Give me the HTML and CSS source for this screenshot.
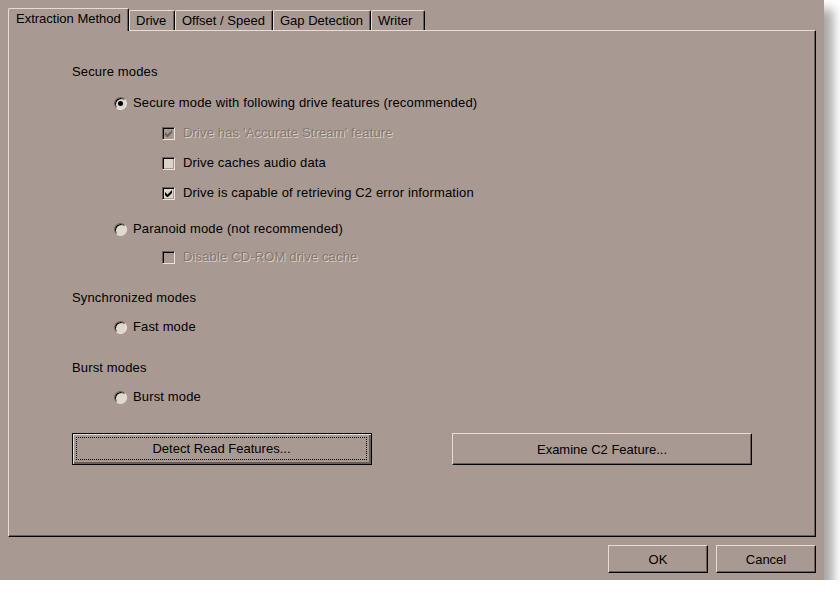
FILE: index.html
```html
<!DOCTYPE html>
<html>
  <head>
    <title>Drive Options</title>
    <link rel="stylesheet" href="styles.css">
  </head>
  <body>
    <div class="window">
      <div class="tabs">
        <div class="tab active">Extraction Method</div>
        <div class="tab tab-drive">Drive</div>
        <div class="tab tab-offset">Offset / Speed</div>
        <div class="tab tab-gap">Gap Detection</div>
        <div class="tab tab-writer">Writer</div>
      </div>

      <div class="panel">
        <div class="heading first">Secure modes</div>

        <div class="option radio-row r-secure">
          <span class="radio checked"></span>
          <span>Secure mode with following drive features (recommended)</span>
        </div>
        <div class="option check-row c-stream disabled">
          <span class="check checked">
            <svg width="7" height="7" viewBox="0 0 7 7"><path d="M0 2v3l2 2h1l4-4V0L2.5 4.5z" /></svg>
          </span>
          <span>Drive has 'Accurate Stream' feature</span>
        </div>
        <div class="option check-row c-cache">
          <span class="check"></span>
          <span>Drive caches audio data</span>
        </div>
        <div class="option check-row c-c2">
          <span class="check checked">
            <svg width="7" height="7" viewBox="0 0 7 7"><path d="M0 2v3l2 2h1l4-4V0L2.5 4.5z" /></svg>
          </span>
          <span>Drive is capable of retrieving C2 error information</span>
        </div>

        <div class="option radio-row r-paranoid">
          <span class="radio"></span>
          <span>Paranoid mode (not recommended)</span>
        </div>
        <div class="option check-row c-disable disabled">
          <span class="check"></span>
          <span>Disable CD-ROM drive cache</span>
        </div>

        <div class="heading">Synchronized modes</div>
        <div class="option radio-row r-mode">
          <span class="radio"></span>
          <span>Fast mode</span>
        </div>

        <div class="heading">Burst modes</div>
        <div class="option radio-row r-mode">
          <span class="radio"></span>
          <span>Burst mode</span>
        </div>

        <div class="panel-buttons">
          <div class="button default"><span class="focus">Detect Read Features...</span></div>
          <div class="button">Examine C2 Feature...</div>
        </div>
      </div>

      <div class="footer">
        <div class="button small">OK</div>
        <div class="button small">Cancel</div>
      </div>
    </div>
  </body>
</html>
```

FILE: styles.css
```css
body {
  margin: 0;
  background-color: #fff;
  font-family: "Liberation Sans", Arial, sans-serif;
  font-size: 13px;
  color: #000;
}

.window {
  width: 808px;
  height: 572px;
  padding: 8px 8px 0 8px;
  background-color: #a89a92;
  box-shadow: 9px 9px 10px rgba(0, 0, 0, 0.35);
}

/* tab strip */
.tabs {
  display: flex;
  align-items: flex-end;
  height: 22px;
  position: relative;
  z-index: 1;
}

.tab {
  height: 20px;
  line-height: 20px;
  padding: 0 6px;
  border-top: 1px solid #e6ded6;
  border-left: 1px solid #e6ded6;
  border-right: 1px solid #000;
  box-shadow: inset -1px 0 #6b5f59;
  border-radius: 2px 2px 0 0;
  box-sizing: border-box;
}

.tab.active {
  height: 23px;
  line-height: 20px;
  padding: 0 7px;
  width: 121px;
  margin-bottom: -1px;
  background-color: #a89a92;
}

.tab-drive { width: 46px; }
.tab-offset { width: 98px; }
.tab-gap { width: 98px; }
.tab-writer { width: 54px; }

/* page */
.panel {
  height: 505px;
  border-top: 1px solid #e6ded6;
  border-left: 1px solid #e6ded6;
  border-right: 1px solid #000;
  border-bottom: 1px solid #000;
  box-shadow: inset -1px -1px #6b5f59;
  padding-left: 63px;
  letter-spacing: 0.15px;
}

.heading {
  height: 16px;
  line-height: 16px;
  margin-top: 25px;
}

.heading.first {
  margin-top: 33px;
}

.option {
  display: flex;
  align-items: center;
  height: 16px;
  line-height: 16px;
}

.radio-row {
  padding-left: 42px;
  gap: 6px;
}

.check-row {
  padding-left: 90px;
  gap: 8px;
}

.r-secure { margin-top: 15px; }
.c-stream { margin-top: 14px; }
.c-cache { margin-top: 14px; }
.c-c2 { margin-top: 14px; }
.r-paranoid { margin-top: 20px; }
.c-disable { margin-top: 12px; }
.r-mode { margin-top: 13px; }

.radio {
  width: 13px;
  height: 13px;
  box-sizing: border-box;
  border-radius: 50%;
  border: 1px solid;
  border-color: #6b5f59 #ece4dc #ece4dc #6b5f59;
  background-color: #e0d8d0;
  box-shadow: inset 1px 1px #000;
  display: flex;
  align-items: center;
  justify-content: center;
}

.radio.checked::after {
  content: "";
  width: 5px;
  height: 5px;
  border-radius: 50%;
  background-color: #000;
}

.check {
  width: 13px;
  height: 13px;
  box-sizing: border-box;
  border: 1px solid;
  border-color: #6b5f59 #ece4dc #ece4dc #6b5f59;
  box-shadow: inset 1px 1px #000, inset -1px -1px #a89a92;
  background-color: #dcd4cc;
  display: flex;
  align-items: center;
  justify-content: center;
}

.check svg {
  fill: #000;
}

.disabled {
  color: #857870;
  text-shadow: 1px 1px #d8d0c8;
}

.disabled .check {
  background-color: #a89a92;
}

.disabled .check svg {
  fill: #6b5f59;
}

/* buttons */
.panel-buttons {
  display: flex;
  gap: 80px;
  margin-top: 28px;
  letter-spacing: 0;
}

.button {
  width: 300px;
  height: 32px;
  box-sizing: border-box;
  border-top: 1px solid #e6ded6;
  border-left: 1px solid #e6ded6;
  border-right: 1px solid #000;
  border-bottom: 1px solid #000;
  box-shadow: inset -1px -1px #6b5f59;
  display: flex;
  align-items: center;
  justify-content: center;
}

.button.default {
  border: 1px solid #000;
  box-shadow: inset 1px 1px #e6ded6, inset -2px -2px #6b5f59;
  padding: 3px 4px 4px 3px;
}

.focus {
  flex: 1;
  align-self: stretch;
  display: flex;
  align-items: center;
  justify-content: center;
  border: 1px dotted #000;
}

.footer {
  display: flex;
  justify-content: flex-end;
  gap: 8px;
  margin-top: 8px;
}

.button.small {
  width: 100px;
  height: 28px;
}
```
